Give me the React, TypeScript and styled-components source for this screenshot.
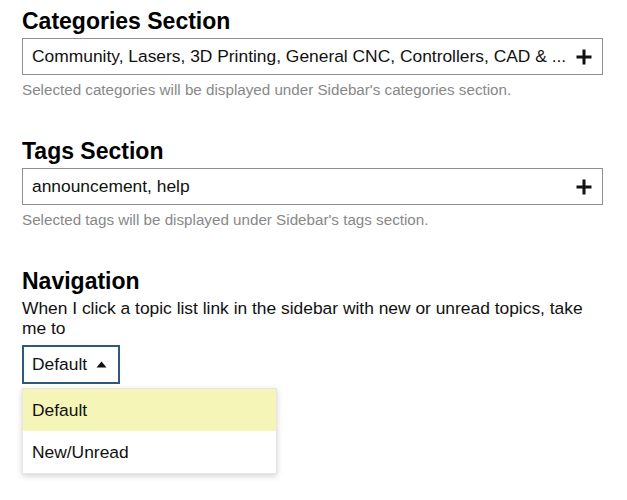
import React from "react";
import styled, { createGlobalStyle } from "styled-components";

const Global = createGlobalStyle`
  html, body { margin: 0; padding: 0; background: #fff; }
  body { font-family: "Liberation Sans", Arial, sans-serif; color: #111; }
`;

const Page = styled.div`
  padding: 7px 24px 0 22px;
  width: 581px;
  min-height: 493px;
`;

const Section = styled.section`
  display: flex;
  flex-direction: column;
  margin-bottom: 38px;
`;

const Heading = styled.h2`
  margin: 0 0 3px;
  font-size: 23px;
  line-height: 28px;
  font-weight: bold;
  color: #000;
`;

const Field = styled.div`
  display: flex;
  align-items: center;
  height: 37px;
  box-sizing: border-box;
  border: 1px solid #909090;
  padding: 0 10px 0 9px;
  gap: 8px;
`;

const FieldText = styled.span`
  flex: 1;
  font-size: 17.4px;
  white-space: nowrap;
  overflow: hidden;
  color: #111;
`;

const Help = styled.p`
  margin: 6px 0 0;
  font-size: 15.2px;
  line-height: 18px;
  color: #888;
`;

const Body = styled.p`
  margin: 0;
  font-size: 17.4px;
  line-height: 20px;
  color: #111;
`;

const DropWrap = styled.div`
  position: relative;
  margin-top: 7px;
`;

const DropButton = styled.div`
  display: inline-flex;
  align-items: center;
  gap: 9px;
  height: 39px;
  box-sizing: border-box;
  border: 2px solid #2d5a7b;
  padding: 0 11px 0 8px;
  font-size: 17.4px;
  color: #111;
`;

const Menu = styled.ul`
  position: absolute;
  left: 0;
  top: 43px;
  width: 255px;
  margin: 0;
  padding: 0;
  list-style: none;
  background: #fff;
  border: 1px solid #e6e6e6;
  box-sizing: border-box;
  box-shadow: 0 2px 6px rgba(0, 0, 0, 0.18);
`;

const Item = styled.li<{ $active?: boolean }>`
  height: 42px;
  display: flex;
  align-items: center;
  padding: 0 9px;
  font-size: 17.4px;
  color: #111;
  background: ${(p) => (p.$active ? "#f5f5b8" : "#fff")};
`;

const Plus = () => (
  <svg width="16" height="16" viewBox="0 0 16 16">
    <rect x="6.5" y="0.5" width="3" height="15" fill="#111" />
    <rect x="0.5" y="6.5" width="15" height="3" fill="#111" />
  </svg>
);

const Caret = () => (
  <svg width="11" height="7" viewBox="0 0 11 7">
    <polygon points="5.5,0.5 10.5,6.5 0.5,6.5" fill="#111" />
  </svg>
);

export default function App() {
  return (
    <Page>
      <Global />
      <Section>
        <Heading>Categories Section</Heading>
        <Field>
          <FieldText>
            Community, Lasers, 3D Printing, General CNC, Controllers, CAD &amp; ...
          </FieldText>
          <Plus />
        </Field>
        <Help>Selected categories will be displayed under Sidebar's categories section.</Help>
      </Section>
      <Section>
        <Heading>Tags Section</Heading>
        <Field>
          <FieldText>announcement, help</FieldText>
          <Plus />
        </Field>
        <Help>Selected tags will be displayed under Sidebar's tags section.</Help>
      </Section>
      <Section>
        <Heading>Navigation</Heading>
        <Body>
          When I click a topic list link in the sidebar with new or unread topics, take me to
        </Body>
        <DropWrap>
          <DropButton>
            Default <Caret />
          </DropButton>
          <Menu>
            <Item $active>Default</Item>
            <Item>New/Unread</Item>
          </Menu>
        </DropWrap>
      </Section>
    </Page>
  );
}
